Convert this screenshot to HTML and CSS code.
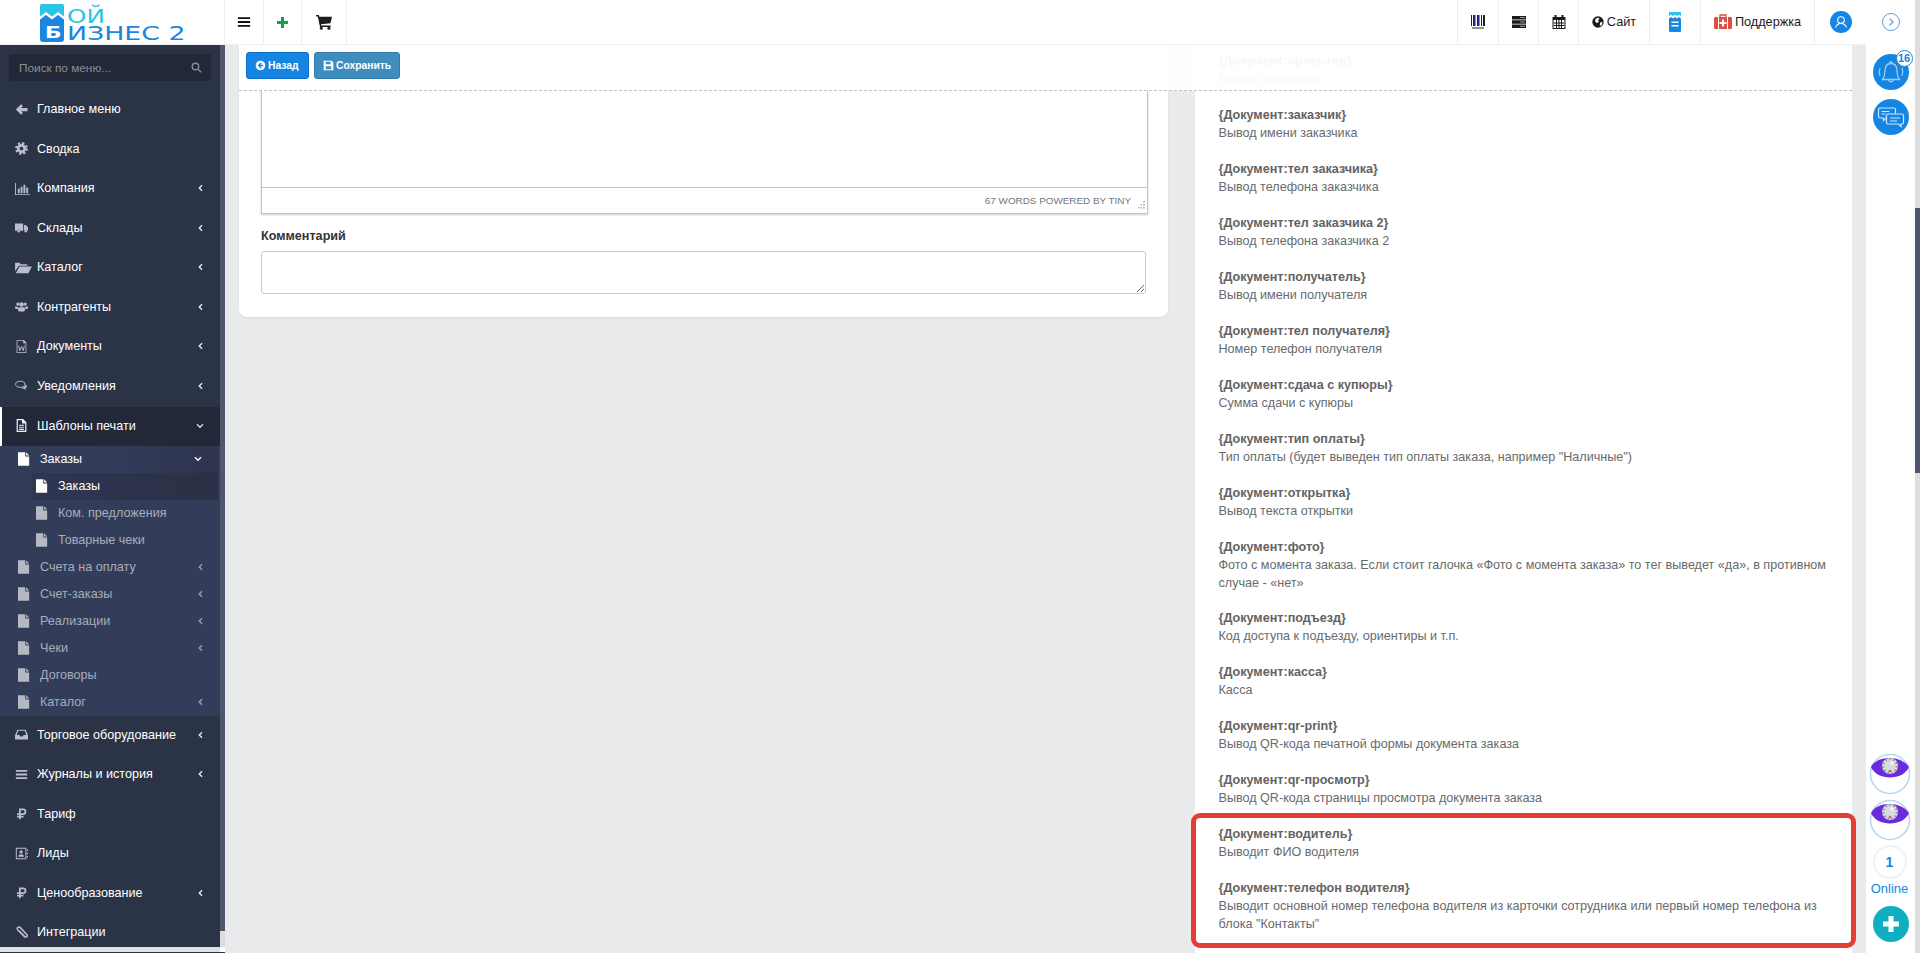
FILE: index.html
```html
<!DOCTYPE html>
<html lang="ru">
<head>
<meta charset="utf-8">
<title>Мой Бизнес 2</title>
<link rel="stylesheet" href="styles.css">
</head>
<body>
<svg class="defs" width="0" height="0" aria-hidden="true">
  <symbol id="i-back" viewBox="0 0 16 16"><path d="M7.500 1.500 1 8l6.500 6.500 2.300-2.300L7.500 10H15.500V6H7.500l2.300-2.200z"/></symbol>
  <symbol id="i-cog" viewBox="0 0 16 16"><circle cx="8" cy="8" r="4" fill="none" stroke="currentColor" stroke-width="3.400"/><circle cx="8" cy="8" r="6.500" fill="none" stroke="currentColor" stroke-width="2.800" stroke-dasharray="2.700 2.400"/></symbol>
  <symbol id="i-chart" viewBox="0 0 16 16"><path d="M0 2h1v12h15v1H0z"/><path d="M3 8h2v5H3zM6 6h2v7H6zM9 4h2v9H9zM12 7h2v6h-2z"/></symbol>
  <symbol id="i-truck" viewBox="0 0 16 16"><path d="M0 3h10v9H6.500a2 2 0 0 0-3.800 0H0zM11 5h2.500L16 8v4h-.8a2 2 0 0 0-3.700 0H11z"/><circle cx="4.600" cy="12.600" r="1.600"/><circle cx="13.300" cy="12.600" r="1.600"/></symbol>
  <symbol id="i-folder" viewBox="0 0 18 16"><path d="M0 3h5l1 1.500h7V6H4L0 12zM4.800 7H18l-3.800 7H.8z"/></symbol>
  <symbol id="i-users" viewBox="0 0 16 16"><circle cx="3.500" cy="5" r="2"/><circle cx="12.500" cy="5" r="2"/><circle cx="8" cy="5.500" r="2.800"/><path d="M0 8h3.200l.8 3H1.500L0 10zM16 8h-3.200l-.8 3h2.500l1.500-1zM4.500 9h7l1 3.500L11 14H5l-1.500-1.500z"/></symbol>
  <symbol id="i-word" viewBox="0 0 16 16"><path fill-rule="evenodd" d="M2 0h9l3 3v13H2zm1 1v14h10V4h-3V1z"/><path fill="none" stroke="currentColor" stroke-width="1.200" d="M4.500 7l1.300 6 2.200-5 2.200 5 1.300-6"/></symbol>
  <symbol id="i-comments" viewBox="0 0 16 16"><ellipse cx="6.500" cy="6.500" rx="5.700" ry="3.700" fill="none" stroke="currentColor" stroke-width="1.200"/><path d="M13 6.500c2.500 1.800 2 4-.3 5l1 1.800-3-1.300c-1.500 0-2.500-.3-3.300-1 2 0 5-.5 5.600-4.500z"/></symbol>
  <symbol id="i-doc" viewBox="0 0 16 16"><path fill-rule="evenodd" d="M2 0h8l4 4v12H2zm1.500 1.500v13h9V5.400H8.600V1.500zM5 7h6v1.400H5zm0 2.500h6v1.400H5zM5 12h6v1.400H5z"/></symbol>
  <symbol id="i-file" viewBox="0 0 14 16"><path d="M0 0h8.500v5H13v11H0zM9.500 0 13 4H9.500z"/></symbol>
  <symbol id="i-inbox" viewBox="0 0 16 16"><path fill-rule="evenodd" d="M3 2h10l3 7v5H0V9zm1 1.500L2 8.500h3.500l1 2h3l1-2H14l-2-5z"/></symbol>
  <symbol id="i-bars" viewBox="0 0 16 16"><path d="M1 2.500h14v2.200H1zM1 6.900h14v2.200H1zM1 11.300h14v2.200H1z"/></symbol>
  <symbol id="i-rub" viewBox="0 0 16 16"><path fill="none" stroke="currentColor" stroke-width="2.200" d="M6 15V3h4a2.800 2.800 0 0 1 0 5.800H2.500M2.500 11.800h8"/></symbol>
  <symbol id="i-contact" viewBox="0 0 16 16"><path fill-rule="evenodd" d="M1 1h13v14H1zm1.200 1.200v11.600h10.600V2.200z"/><circle cx="7.500" cy="6" r="2"/><path d="M4 12c0-4 7-4 7 0zM14.500 3H16v2h-1.500zM14.500 7H16v2h-1.500zM14.500 11H16v2h-1.500z"/></symbol>
  <symbol id="i-clip" viewBox="0 0 16 16"><path fill="none" stroke="currentColor" stroke-width="1.900" d="M12.500 14 3.500 5C1 2.500 4.500 0 6.500 2l8 8.500c1.800 2-1 4-2.500 2.500L5 6"/></symbol>
  <symbol id="i-search" viewBox="0 0 16 16"><circle cx="6.500" cy="6.500" r="4.700" fill="none" stroke="currentColor" stroke-width="2"/><path d="M10 11.500 11.500 10l4 4-1.500 1.500z"/></symbol>
  <symbol id="i-chev-left" viewBox="0 0 8 12"><path fill="none" stroke="currentColor" stroke-width="2.200" d="M6.500 1.500 2 6l4.500 4.500"/></symbol>
  <symbol id="i-chev-down" viewBox="0 0 12 8"><path fill="none" stroke="currentColor" stroke-width="2" d="M1.500 1.500 6 6l4.500-4.500"/></symbol>
  <symbol id="i-circle-left" viewBox="0 0 16 16"><path fill-rule="evenodd" d="M8 1a7 7 0 1 1 0 14A7 7 0 0 1 8 1zm.3 2.700L4 8l4.300 4.300 1.400-1.400L7.800 9H12V7H7.800l1.900-1.900z"/></symbol>
  <symbol id="i-save" viewBox="0 0 16 16"><path fill-rule="evenodd" d="M1 1h11.500L15 3.500V15H1zm3 1.500V6h7V2.500zM4 9v4.500h8V9z"/></symbol>
</svg>

<div class="app">
  <div class="main">
    <header class="topbar">
      <a class="logo">
        <svg width="150" height="44" viewBox="0 0 150 44">
          <path fill="#29c4e8" d="M3 4h20a2 2 0 0 1 2 2v10.500L19 12l-6 4.500L7 12l-6 4.500V6a2 2 0 0 1 2-2z"/>
          <path fill="#1a86e0" d="M1 19.500 7 15l6 4.500 6-4.500 6 4.500V39a3 3 0 0 1-3 3H4a3 3 0 0 1-3-3z"/>
          <text class="logo-b" transform="translate(6 38) scale(1.450 1)">Б</text>
          <text class="logo-top" transform="translate(28 23) scale(1.300 1)">ОЙ</text>
          <text class="logo-bottom" transform="translate(28 40) scale(1.410 1)">ИЗНЕС 2</text>
        </svg>
      </a>
      <div class="tool w-39">
        <svg class="ic14 c-black"><use href="#i-bars"/></svg>
      </div>
      <div class="tool w-38">
        <svg class="ic11" viewBox="0 0 11 11"><path fill="#0ea54a" d="M4 0h3v4h4v3H7v4H4V7H0V4h4z"/></svg>
      </div>
      <div class="tool w-45">
        <svg class="ic15" viewBox="0 0 18 18"><path fill="#1d1d1d" d="M0 1h3.200l.6 2.200H18l-1.700 7.300-10.700 1.100.4 1.400h10.500v1.700H4.500L2 2.800H0z"/><circle cx="6" cy="16" r="1.700" fill="#1d1d1d"/><circle cx="14.500" cy="16" r="1.700" fill="#1d1d1d"/></svg>
      </div>
      <div class="spacer"></div>
      <div class="tool w-41">
        <svg class="ic14" viewBox="0 0 14 14"><path fill="#222" d="M0 0h1v11H0zM2 0h1v11H2zM6 0h1v11H6zM10 0h1v11h-1zM12 0h2v11h-2z"/><path fill="#d9811b" d="M4 0h1v11H4zM8 0h1v11H8z"/><path fill="#2d2d8a" d="M3 0h1v11H3zM7 0h1v11H7z"/><path fill="#222" d="M1 12.500h12v1H1z"/></svg>
      </div>
      <div class="tool w-40">
        <svg class="ic14" viewBox="0 0 14 12"><path fill="#1a1a1a" d="M0 0h14v3.400H0zM0 4.300h14v3.400H0zM0 8.600h14V12H0z"/><path fill="#999" d="M8 1h5v1H8zM8 5.500h5v1H8zM8 9.800h5v1H8z"/></svg>
      </div>
      <div class="tool w-40">
        <svg class="ic14" viewBox="0 0 13 14"><path fill="#1a1a1a" fill-rule="evenodd" d="M0 2h2V0h2v2h5V0h2v2h2v12H0zm1 3v8h11V5z"/><path fill="#1a1a1a" d="M3.500 5h1v8h-1zM6 5h1v8H6zM8.500 5h1v8h-1zM1 7.500h11v1H1zM1 10h11v1H1z"/></svg>
      </div>
      <div class="tool w-71 gap-3">
        <svg class="ic12" viewBox="0 0 12 12"><circle cx="6" cy="6" r="5.700" fill="#1a1a1a"/><path fill="#fff" d="M3.500 3 6 1.500l1.500 1.200L6 4.500l1 1.500-2.500 1L3 5zM8 6.500l2.500-.5-.7 3-2 1.200z"/></svg>
        <span>Сайт</span>
      </div>
      <div class="tool w-51">
        <svg width="12" height="20" viewBox="0 0 12 20"><path fill="#29c4e8" d="M0 0h12v4L10 2.800 8 4 6 2.800 4 4 2 2.800 0 4z"/><path fill="#1a86e0" d="M0 6.500 2 5l2 1.500L6 5l2 1.500L10 5l2 1.500V19a1 1 0 0 1-1 1H1a1 1 0 0 1-1-1z"/><path fill="#fff" d="M2.500 9.500h7V11h-7zM2.500 13h7v1.500h-7z"/></svg>
      </div>
      <div class="tool w-114 gap-3">
        <svg width="18" height="16" viewBox="0 0 18 16"><path fill="#e24b3f" d="M1.500 3H4v12H1.500A1.500 1.500 0 0 1 0 13.500v-9A1.500 1.500 0 0 1 1.500 3zM14 3h2.500A1.500 1.500 0 0 1 18 4.500v9a1.500 1.500 0 0 1-1.500 1.500H14zM5 3h8v12H5z"/><path fill="none" stroke="#e24b3f" stroke-width="1.300" d="M6 3V1h6v2"/><path fill="#fff" d="M8 5.500h2V8h2.500v2H10v2.500H8V10H5.500V8H8z"/></svg>
        <span>Поддержка</span>
      </div>
      <div class="tool w-51 no-border">
        <svg width="22" height="22" viewBox="0 0 22 22"><circle cx="11" cy="11" r="11" fill="#1486e2"/><circle cx="11" cy="9" r="3.300" fill="none" stroke="#fff" stroke-width="1.100"/><path fill="none" stroke="#fff" stroke-width="1.100" d="M5.500 16.500c1-3 3-4 5.500-4s4.500 1 5.500 4"/></svg>
      </div>
    </header>
    <div class="body">
      <aside class="sidebar">
        <div class="sidebar-view">
          <div class="side-scroll">
            <div class="search-wrap">
              <div class="search">
                <span>Поиск по меню...</span>
                <svg class="search-ic"><use href="#i-search"/></svg>
              </div>
            </div>
            <nav>
              <a class="row"><svg class="ric"><use href="#i-back"/></svg><span class="lbl">Главное меню</span></a>
              <a class="row"><svg class="ric"><use href="#i-cog"/></svg><span class="lbl">Сводка</span></a>
              <a class="row"><svg class="ric ric-15"><use href="#i-chart"/></svg><span class="lbl">Компания</span><svg class="chev"><use href="#i-chev-left"/></svg></a>
              <a class="row"><svg class="ric"><use href="#i-truck"/></svg><span class="lbl">Склады</span><svg class="chev"><use href="#i-chev-left"/></svg></a>
              <a class="row"><svg class="ric ric-wide"><use href="#i-folder"/></svg><span class="lbl">Каталог</span><svg class="chev"><use href="#i-chev-left"/></svg></a>
              <a class="row"><svg class="ric"><use href="#i-users"/></svg><span class="lbl">Контрагенты</span><svg class="chev"><use href="#i-chev-left"/></svg></a>
              <a class="row"><svg class="ric"><use href="#i-word"/></svg><span class="lbl">Документы</span><svg class="chev"><use href="#i-chev-left"/></svg></a>
              <a class="row"><svg class="ric"><use href="#i-comments"/></svg><span class="lbl">Уведомления</span><svg class="chev"><use href="#i-chev-left"/></svg></a>
              <a class="row active"><svg class="ric"><use href="#i-doc"/></svg><span class="lbl">Шаблоны печати</span><svg class="chev-d"><use href="#i-chev-down"/></svg></a>
              <div class="sub">
                <a class="srow open"><svg class="fic"><use href="#i-file"/></svg><span class="lbl">Заказы</span><svg class="chev-d chev-d-sub"><use href="#i-chev-down"/></svg></a>
                <a class="srow deep current"><svg class="fic"><use href="#i-file"/></svg><span class="lbl">Заказы</span></a>
                <a class="srow deep"><svg class="fic"><use href="#i-file"/></svg><span class="lbl">Ком. предложения</span></a>
                <a class="srow deep"><svg class="fic"><use href="#i-file"/></svg><span class="lbl">Товарные чеки</span></a>
                <a class="srow"><svg class="fic"><use href="#i-file"/></svg><span class="lbl">Счета на оплату</span><svg class="chev dim"><use href="#i-chev-left"/></svg></a>
                <a class="srow"><svg class="fic"><use href="#i-file"/></svg><span class="lbl">Счет-заказы</span><svg class="chev dim"><use href="#i-chev-left"/></svg></a>
                <a class="srow"><svg class="fic"><use href="#i-file"/></svg><span class="lbl">Реализации</span><svg class="chev dim"><use href="#i-chev-left"/></svg></a>
                <a class="srow"><svg class="fic"><use href="#i-file"/></svg><span class="lbl">Чеки</span><svg class="chev dim"><use href="#i-chev-left"/></svg></a>
                <a class="srow"><svg class="fic"><use href="#i-file"/></svg><span class="lbl">Договоры</span></a>
                <a class="srow"><svg class="fic"><use href="#i-file"/></svg><span class="lbl">Каталог</span><svg class="chev dim"><use href="#i-chev-left"/></svg></a>
              </div>
              <a class="row"><svg class="ric"><use href="#i-inbox"/></svg><span class="lbl">Торговое оборудование</span><svg class="chev"><use href="#i-chev-left"/></svg></a>
              <a class="row"><svg class="ric"><use href="#i-bars"/></svg><span class="lbl">Журналы и история</span><svg class="chev"><use href="#i-chev-left"/></svg></a>
              <a class="row"><svg class="ric"><use href="#i-rub"/></svg><span class="lbl">Тариф</span></a>
              <a class="row"><svg class="ric"><use href="#i-contact"/></svg><span class="lbl">Лиды</span></a>
              <a class="row"><svg class="ric"><use href="#i-rub"/></svg><span class="lbl">Ценообразование</span><svg class="chev"><use href="#i-chev-left"/></svg></a>
              <a class="row"><svg class="ric"><use href="#i-clip"/></svg><span class="lbl">Интеграции</span></a>
            </nav>
          </div>
          <div class="side-bar"><div class="side-thumb"></div></div>
        </div>
        <div class="side-hbar"><div class="side-corner"></div></div>
        <div class="side-foot"></div>
      </aside>
      <section class="content">
        <div class="col-left">
          <div class="card-left">
            <div class="editor">
              <div class="editor-area"></div>
              <div class="editor-status">
                <span>67 WORDS POWERED BY TINY</span>
                <svg class="grip" viewBox="0 0 9 9"><path fill="#b5b5b5" d="M7 0h2v1.500H7zM4.500 3H6v1.500H4.500zM7 3h2v1.500H7zM2 6h1.500v1.500H2zM4.500 6H6v1.500H4.500zM7 6h2v1.500H7z"/></svg>
              </div>
            </div>
            <label class="field-label">Комментарий</label>
            <textarea class="comment"></textarea>
          </div>
        </div>
        <div class="card-right">
          <p class="tag"><b>{Документ:ориентир}</b><br>Вывод ориентира</p>
          <p class="tag"><b>{Документ:заказчик}</b><br>Вывод имени заказчика</p>
          <p class="tag"><b>{Документ:тел заказчика}</b><br>Вывод телефона заказчика</p>
          <p class="tag"><b>{Документ:тел заказчика 2}</b><br>Вывод телефона заказчика 2</p>
          <p class="tag"><b>{Документ:получатель}</b><br>Вывод имени получателя</p>
          <p class="tag"><b>{Документ:тел получателя}</b><br>Номер телефон получателя</p>
          <p class="tag"><b>{Документ:сдача с купюры}</b><br>Сумма сдачи с купюры</p>
          <p class="tag"><b>{Документ:тип оплаты}</b><br>Тип оплаты (будет выведен тип оплаты заказа, например "Наличные")</p>
          <p class="tag"><b>{Документ:открытка}</b><br>Вывод текста открытки</p>
          <p class="tag tag-tight"><b>{Документ:фото}</b><br>Фото с момента заказа. Если стоит галочка «Фото с момента заказа» то тег выведет «да», в противном случае - «нет»</p>
          <p class="tag"><b>{Документ:подъезд}</b><br>Код доступа к подъезду, ориентиры и т.п.</p>
          <p class="tag"><b>{Документ:касса}</b><br>Касса</p>
          <p class="tag"><b>{Документ:qr-print}</b><br>Вывод QR-кода печатной формы документа заказа</p>
          <p class="tag"><b>{Документ:qr-просмотр}</b><br>Вывод QR-кода страницы просмотра документа заказа</p>
          <p class="tag"><b>{Документ:водитель}</b><br>Выводит ФИО водителя</p>
          <p class="tag"><b>{Документ:телефон водителя}</b><br>Выводит основной номер телефона водителя из карточки сотрудника или первый номер телефона из блока "Контакты"</p>
        </div>
        <div class="toolbar">
          <button class="btn btn-back"><svg class="bic"><use href="#i-circle-left"/></svg>Назад</button>
          <button class="btn btn-save"><svg class="bic"><use href="#i-save"/></svg>Сохранить</button>
        </div>
        <div class="annot"></div>
      </section>
    </div>
  </div>
  <aside class="rail">
    <svg class="rail-toggle" width="20" height="20" viewBox="0 0 20 20"><circle cx="10" cy="10" r="8.500" fill="#fff" stroke="#5b9fe0" stroke-width="1"/><path fill="none" stroke="#5b9fe0" stroke-width="1.200" d="M8.700 6.800 12 10l-3.300 3.200"/></svg>
    <div class="bubble bell">
      <svg width="36" height="36" viewBox="0 0 36 36"><path fill="none" stroke="#9ccbf3" stroke-width="1.300" d="M18 9.500c-4.500 0-6 4-6 7.500 0 4.500-1 6.500-2.500 8.500h17c-1.500-2-2.500-4-2.500-8.500 0-3.500-1.500-7.500-6-7.500zM16.500 9.500c0-2.500 3-2.500 3 0M15.500 25.500c.5 3 4.500 3 5 0"/><path fill="none" stroke="#9ccbf3" stroke-width="1.300" d="M7 14c-1 2.500-1 5.500 0 8M29 14c1 2.500 1 5.500 0 8"/></svg>
      <span class="badge">16</span>
    </div>
    <div class="bubble chat">
      <svg width="36" height="36" viewBox="0 0 36 36"><path fill="#1486e2" stroke="#cfe6fa" stroke-width="1.200" d="M7 9h14a1.500 1.500 0 0 1 1.500 1.500v7A1.500 1.500 0 0 1 21 19h-8l-2.500 2.500V19H7a1.500 1.500 0 0 1-1.500-1.500v-7A1.500 1.500 0 0 1 7 9z"/><path fill="#1486e2" stroke="#cfe6fa" stroke-width="1.200" d="M15 15h14a1.500 1.500 0 0 1 1.500 1.500v7A1.500 1.500 0 0 1 29 25h-1v2.500L25.500 25H15a1.500 1.500 0 0 1-1.500-1.500v-7A1.500 1.500 0 0 1 15 15z"/><path stroke="#cfe6fa" stroke-width="1.200" d="M8.500 12.500h8M8.500 15h4M17 19h10M17 22h7"/></svg>
    </div>
    <div class="rail-spacer"></div>
    <svg class="eye" width="42" height="42" viewBox="0 0 42 42">
      <circle cx="21" cy="21" r="19.500" fill="#fff" stroke="#b8d5f5" stroke-width="1.600"/>
      <path fill="#6a2be0" d="M2 14C8 2 32 2 40 14 34 28 8 28 2 14z"/>
      <circle cx="21" cy="13" r="8" fill="#d8dbde"/><circle cx="21" cy="13" r="7" fill="none" stroke="#8f9398" stroke-width="2.500" stroke-dasharray="1.500 2.500"/><circle cx="21" cy="18" r="1.200" fill="#d9573a"/><circle cx="23" cy="10" r="2" fill="#f1f3f4"/>
    </svg>
    <svg class="eye eye-2" width="42" height="42" viewBox="0 0 42 42">
      <circle cx="21" cy="21" r="19.500" fill="#fff" stroke="#b8d5f5" stroke-width="1.600"/>
      <path fill="#6a2be0" d="M2 14C8 2 32 2 40 14 34 28 8 28 2 14z"/>
      <circle cx="21" cy="13" r="8" fill="#d8dbde"/><circle cx="21" cy="13" r="7" fill="none" stroke="#8f9398" stroke-width="2.500" stroke-dasharray="1.500 2.500"/><circle cx="21" cy="18" r="1.200" fill="#d9573a"/><circle cx="23" cy="10" r="2" fill="#f1f3f4"/>
    </svg>
    <div class="online-count">1</div>
    <div class="online-label">Online</div>
    <div class="add">
      <svg width="20" height="20" viewBox="0 0 20 20"><path fill="#fff" d="M7.500 2h5v5.500H18v5h-5.500V18h-5v-5.500H2v-5h5.500z"/></svg>
    </div>
  </aside>
  <div class="page-scroll"><div class="page-thumb"></div></div>
</div>
</body>
</html>
```

FILE: styles.css
```css
* { box-sizing: border-box; }
html, body { margin: 0; padding: 0; height: 953px; overflow: hidden; }
body { font-family: "Liberation Sans", Arial, sans-serif; font-size: 12.6px; color: #676a6c; background: #e9eaec; }
.defs { position: absolute; }
.app { display: flex; width: 1920px; height: 953px; overflow: hidden; }
.main { width: 1866px; display: flex; flex-direction: column; }

/* header */
.topbar { height: 45px; flex: none; background: #fff; display: flex; align-items: stretch; border-bottom: 1px solid #f0f0f0; position: relative; z-index: 3; color: #1a1a1a; font-size: 12.7px; }
.logo { width: 225px; padding: 0 0 0 39px; display: block; border-right: 1px solid #eee; flex: none; overflow: hidden; }
.logo svg { display: block; }
.logo-b { font: 700 15px "DejaVu Sans", sans-serif; fill: #fff; }
.logo-top { font: 400 19px "DejaVu Sans", sans-serif; fill: #29c4e8; }
.logo-bottom { font: 400 19px "DejaVu Sans", sans-serif; fill: #1a86e0; }
.tool { display: flex; align-items: center; justify-content: center; border-right: 1px solid #eee; flex: none; }
.tool.no-border { border-right: 0; }
.gap-3 { gap: 3px; }
.w-38 { width: 38px; } .w-39 { width: 39px; } .w-40 { width: 40px; } .w-41 { width: 41px; } .w-45 { width: 45px; }
.w-51 { width: 51px; } .w-71 { width: 71px; } .w-114 { width: 114px; }
.spacer { flex: 1; border-right: 1px solid #eee; }
.ic14 { width: 14px; height: 14px; } .ic11 { width: 11px; height: 11px; } .ic15 { width: 16px; height: 16px; }
.ic12 { width: 12px; height: 12px; }
.c-black { fill: #111; }

.body { flex: 1; display: flex; min-height: 0; }

/* sidebar */
.sidebar { width: 225px; flex: none; display: flex; flex-direction: column; background: #e0e0e0; }
.sidebar-view { height: 902px; flex: none; display: flex; }
.side-scroll { width: 220px; background: #2b3347; overflow: hidden; color: #fff; }
.side-bar { width: 5px; background: #dddddd; }
.side-thumb { height: 886px; background: #50566b; }
.side-hbar { height: 5px; flex: none; display: flex; justify-content: flex-end; background: #e0e0e0; }
.side-corner { width: 5px; background: #fff; }
.side-foot { height: 1px; flex: none; background: #2b3347; }
.search-wrap { height: 45.7px; padding: 9px 9px 0; }
.search { height: 27px; background: #232838; border-radius: 3px; padding: 0 9px 0 10px; display: flex; align-items: center; justify-content: space-between; font-size: 11.8px; color: #8b8f99; }
.search-ic { width: 11px; height: 11px; fill: #8b8f99; color: #8b8f99; }
.row { height: 39.5px; display: flex; align-items: center; padding: 0 17.500px 2px 15px; font-size: 12.6px; color: #fff; position: relative; }
.ric { width: 13px; height: 13px; flex: none; fill: #b9bdcf; color: #b9bdcf; margin-right: 9px; }
.ric-15 { width: 15px; height: 15px; margin-right: 7px; }
.ric-wide { width: 17px; height: 15px; margin-right: 5px; }
.lbl { flex: 1; white-space: nowrap; }
.chev { width: 5px; height: 8px; flex: none; color: #e8eaf0; }
.chev.dim { color: #9aa0ae; }
.chev-d { width: 8px; height: 6px; flex: none; margin-right: -1px; color: #d8dbe4; }
.chev-d-sub { color: #fff; margin-right: 0; }
.row.active { background: #232838; border-left: 2px solid #fff; padding-left: 13px; padding-bottom: 1px; }
.row.active .ric { fill: #eceef3; color: #eceef3; }
.sub { background: #333d5a; }
.srow { height: 27px; display: flex; align-items: center; padding: 0 17.500px 2px 18px; color: #a7adba; font-size: 12.6px; }
.srow .lbl { margin-left: 10px; }
.fic { width: 12px; height: 14px; flex: none; fill: #b5b9c3; }
.srow.deep { padding-left: 36px; }
.srow.open { color: #fff; background: linear-gradient(90deg, #333d5a 35%, #2e3450 100%); margin-right: 2px; padding-right: 16px; }
.srow.open .fic, .srow.current .fic { fill: #fff; }
.srow.current { color: #fff; background: linear-gradient(90deg, #2f3650 0%, #2b3046 100%); margin-left: 32px; margin-right: 2px; padding-left: 4px; }

/* content */
.content { flex: 1; position: relative; display: flex; padding-left: 14px; background: #e9eaec; overflow: hidden; }
.col-left { width: 929px; flex: none; }
.card-left { background: #fff; height: 272px; padding: 0 20px 0 22px; border-radius: 0 0 8px 8px; box-shadow: 0 1px 2px rgba(0,0,0,.08); }
.editor { height: 169px; border: 1px solid #c5c5c5; border-top: 0; box-shadow: 0 1px 2px rgba(0,0,0,.2); display: flex; flex-direction: column; }
.editor-area { height: 143px; border-bottom: 1px solid #c5c5c5; }
.editor-status { flex: 1; display: flex; align-items: center; justify-content: flex-end; gap: 5px; padding-right: 2px; font-size: 9.900px; color: #6f7680; }
.grip { width: 9px; height: 9px; margin-top: 10px; }
.field-label { display: block; margin-top: 13px; font-size: 12.6px; line-height: 18px; font-weight: 700; color: #333; }
.comment { display: block; width: 885px; height: 43px; margin-top: 6px; border: 1px solid #c9c9c9; border-radius: 3px; background: #fff; padding: 0; outline: 0; }
.card-right { margin-left: 27px; width: 657px; background: #fff; padding: 7px 20px 0 23.500px; height: 908px; overflow: hidden; }
.tag { margin: 0 0 18px; line-height: 18px; color: #676a6c; font-size: 12.6px; }
.tag-tight { margin-bottom: 17px; }
.tag b { color: #636363; }
.toolbar { position: absolute; left: 14px; top: 0; width: 1613px; height: 46px; background: rgba(255,255,255,.95); border-bottom: 1px dashed #c2c2c2; display: flex; align-items: flex-start; gap: 5px; padding: 7px 0 0 7px; }
.btn { height: 27px; display: flex; align-items: center; gap: 2px; padding: 0 8px 0 8px; border-radius: 3px; color: #fff; font: 700 10.300px "Liberation Sans", sans-serif; border: 1px solid; }
.btn-back { width: 63px; background: #1486e2; border-color: #0b6fc6; }
.btn-save { width: 86px; background: #3e8dbe; border-color: #337ca8; }
.bic { width: 11px; height: 11px; fill: #fff; flex: none; }
.annot { position: absolute; left: 966px; top: 768px; width: 665px; height: 135px; border: 5px solid #e53c36; border-radius: 9px; }

/* rail */
.rail { width: 49px; flex: none; background: #fff; display: flex; flex-direction: column; align-items: center; height: 953px; }
.rail-toggle { margin-top: 12px; flex: none; }
.bubble { width: 36px; height: 36px; border-radius: 50%; background: #1486e2; position: relative; flex: none; }
.bubble svg { display: block; }
.bell { margin-top: 22px; }
.chat { margin-top: 9px; }
.badge { position: absolute; left: 23px; top: -4px; width: 17px; height: 17px; border-radius: 50%; background: #fff; border: 1px solid #1486e2; color: #1486e2; font-size: 11px; font-weight: 700; line-height: 15px; text-align: center; }
.rail-spacer { flex: 1; }
.eye { flex: none; margin-left: -2px; }
.eye-2 { margin-top: 4px; margin-bottom: 1px; }
.online-count { width: 34px; height: 34px; margin-top: 3px; border-radius: 50%; border: 2px solid #f0f2f7; margin-left: -2px; color: #1486e2; font-size: 14px; font-weight: 700; text-align: center; line-height: 30px; flex: none; }
.online-label { color: #1486e2; font-size: 13px; line-height: 16px; margin-top: 2px; flex: none; margin-left: -2px; }
.add { width: 36px; height: 36px; margin-top: 9px; margin-bottom: 11px; border-radius: 50%; background: #10aec2; display: flex; align-items: center; justify-content: center; flex: none; }

.page-scroll { width: 5px; flex: none; background: #dddddd; padding-top: 208px; }
.page-thumb { height: 265px; background: #50566b; }
```
